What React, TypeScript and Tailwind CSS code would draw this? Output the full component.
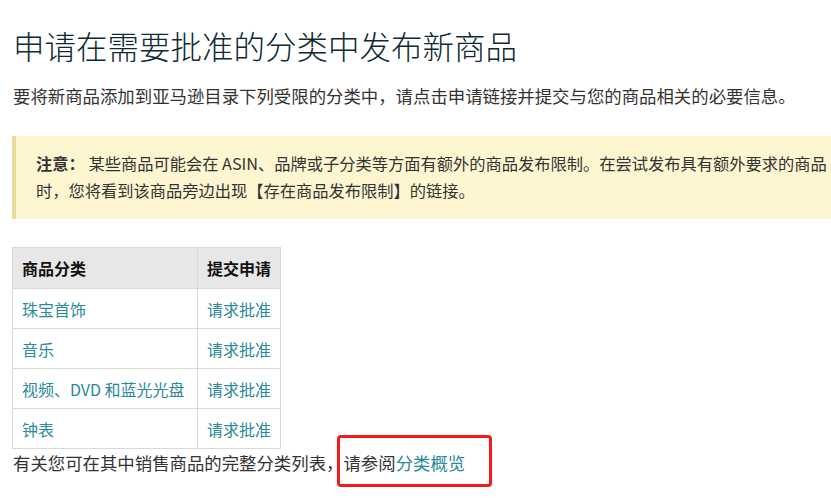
const rows = ["珠宝首饰", "音乐", "视频、DVD 和蓝光光盘", "钟表"];

export default function App() {
  return (
    <div
      className="w-[831px] h-[498px] overflow-hidden bg-white text-[#333] px-3 pt-[25px]"
      style={{ fontFamily: '"Noto Sans CJK SC", "Noto Sans", sans-serif' }}
    >
      {/* Heading */}
      <h1 className="text-[31.5px] leading-[40px] text-[#0f2a33] font-light pl-px">
        申请在需要批准的分类中发布新商品
      </h1>
      <p className="mt-[18px] text-[17.4px] leading-[26px] pl-px whitespace-nowrap">
        要将新商品添加到亚马逊目录下列受限的分类中，请点击申请链接并提交与您的商品相关的必要信息。
      </p>

      {/* Notice */}
      <div className="mt-[27px] w-[860px] bg-[#fdf6d1] border-l-4 border-[#e8dc9f] pl-5 pt-[14px] pb-[15px] text-[16.25px] leading-[27px]">
        <div className="whitespace-nowrap">
          <span className="font-bold">注意：</span> 某些商品可能会在 ASIN、品牌或子分类等方面有额外的商品发布限制。在尝试发布具有额外要求的商品
        </div>
        <div className="whitespace-nowrap">
          时，您将看到该商品旁边出现【存在商品发布限制】的链接。
        </div>
      </div>

      {/* Category table */}
      <table className="mt-[28px] border-collapse text-[16px]">
        <thead>
          <tr className="bg-[#e7e7e7] h-[41px]">
            <th className="w-[185px] border border-[#d9d9d9] px-[9px] text-left font-bold text-[#111]">
              商品分类
            </th>
            <th className="w-[82px] border border-[#d9d9d9] px-[9px] text-left font-bold text-[#111]">
              提交申请
            </th>
          </tr>
        </thead>
        <tbody>
          {rows.map((r) => (
            <tr key={r} className="h-[40px]">
              <td className="border border-[#d9d9d9] px-[9px] text-[#2a8a9b] whitespace-nowrap">{r}</td>
              <td className="border border-[#d9d9d9] px-[9px] text-[#2a8a9b] whitespace-nowrap">请求批准</td>
            </tr>
          ))}
        </tbody>
      </table>

      <p className="text-[17.4px] leading-[28px] pl-px whitespace-nowrap">
        有关您可在其中销售商品的完整分类列表，
        <span className="relative">
          请参阅<span className="text-[#2a8a9b]">分类概览</span>
          <span className="absolute left-[-6px] top-[-15px] w-[155px] h-[52px] border-[3px] border-[#f5191c] rounded-[4px]" />
        </span>
      </p>
    </div>
  );
}
